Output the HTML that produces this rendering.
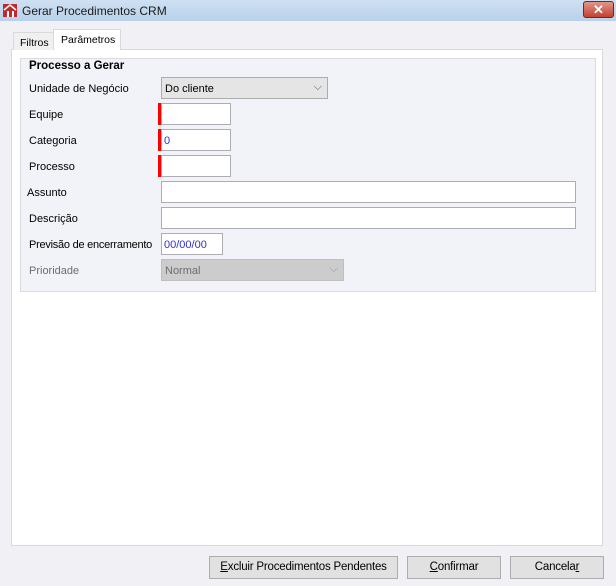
<!DOCTYPE html>
<html><head><style>
*{margin:0;padding:0;box-sizing:border-box}
body{width:616px;height:586px;background:#f0f0f5;font-family:"Liberation Sans",sans-serif;font-size:11px;color:#000;position:relative;overflow:hidden}
.a{position:absolute}
.title{left:0;top:0;width:616px;height:21px;background:linear-gradient(#cfe0f2,#b9d1ea)}
.inp{position:absolute;background:#fff;border:1px solid #abadb3;height:22px}
.red{position:absolute;width:3px;background:#f00}
.lbl{position:absolute;left:29px}
.btn{position:absolute;top:556px;height:23px;background:#e1e1e1;border:1px solid #adadad;text-align:center;line-height:21px;font-size:11.5px;letter-spacing:-0.2px}
</style></head><body>
<div class="a title"></div>
<svg class="a" style="left:2px;top:2px" width="16" height="16"><rect x="1" y="2" width="14" height="13" fill="#c0282a"/><path d="M2 8 L8 3 L14 8" stroke="#fff" stroke-width="1.5" fill="none"/><rect x="5" y="9" width="2" height="6" fill="#fff"/><rect x="10" y="9" width="2" height="6" fill="#fff"/></svg>
<div class="a" style="left:22px;top:4px;font-size:12px;color:#1a1a1a">Gerar Procedimentos CRM</div>
<div class="a" style="left:583px;top:1px;width:31px;height:17px;background:linear-gradient(#e0978a,#c4412e);border:1px solid #6b2a28;border-radius:3px;color:#fff;font-weight:bold;text-align:center;line-height:15px;font-size:13px">✕</div>
<div class="a" style="left:11px;top:49px;width:592px;height:497px;background:#fff;border:1px solid #d9d9d9"></div>
<div class="a" style="left:13px;top:32px;width:41px;height:18px;background:#f0f0f0;border:1px solid #d9d9d9;border-bottom:none;padding:4px 0 0 6px;font-size:10.5px">Filtros</div>
<div class="a" style="left:53px;top:29px;width:68px;height:21px;background:#fff;border:1px solid #d9d9d9;border-bottom:none;padding:4px 0 0 7px;font-size:10.5px">Parâmetros</div>
<div class="a" style="left:20px;top:58px;width:576px;height:234px;background:#f2f3f8;border:1px solid #dcdcdc"></div>
<div class="a" style="left:27px;top:60px;padding:0 2px;background:#f2f3f8;font-weight:bold;font-size:11.5px">Processo a Gerar</div>
<div class="lbl" style="top:83px">Unidade de Negócio</div>
<div class="a" style="left:161px;top:77px;width:167px;height:22px;background:#e5e5e5;border:1px solid #acacac;padding:5px 0 0 3px">Do cliente<span class="a" style="right:5px;top:3px;color:#555">⌵</span></div>
<div class="lbl" style="top:109px">Equipe</div>
<div class="red" style="left:158px;top:103px;height:22px"></div><div class="inp" style="left:161px;top:103px;width:70px"></div>
<div class="lbl" style="top:135px">Categoria</div>
<div class="red" style="left:158px;top:129px;height:22px"></div><div class="inp" style="left:161px;top:129px;width:70px;color:#3030d0;padding:5px 0 0 2px">0</div>
<div class="lbl" style="top:161px">Processo</div>
<div class="red" style="left:158px;top:155px;height:22px"></div><div class="inp" style="left:161px;top:155px;width:70px"></div>
<div class="lbl" style="top:187px;left:27px">Assunto</div>
<div class="inp" style="left:161px;top:181px;width:415px"></div>
<div class="lbl" style="top:213px">Descrição</div>
<div class="inp" style="left:161px;top:207px;width:415px"></div>
<div class="lbl" style="top:239px;letter-spacing:-0.25px">Previsão de encerramento</div>
<div class="inp" style="left:161px;top:233px;width:62px;color:#3030d0;padding:5px 0 0 2px">00/00/00</div>
<div class="lbl" style="top:265px;color:#6d6d6d">Prioridade</div>
<div class="a" style="left:161px;top:259px;width:183px;height:22px;background:#ccc;border:1px solid #bfbfbf;padding:5px 0 0 3px;color:#6d6d6d">Normal<span class="a" style="right:5px;top:3px;color:#999">⌵</span></div>
<div class="btn" style="left:209px;width:189px"><u>E</u>xcluir Procedimentos Pendentes</div>
<div class="btn" style="left:407px;width:94px"><u>C</u>onfirmar</div>
<div class="btn" style="left:510px;width:94px">Cancela<u>r</u></div>
</body></html>
